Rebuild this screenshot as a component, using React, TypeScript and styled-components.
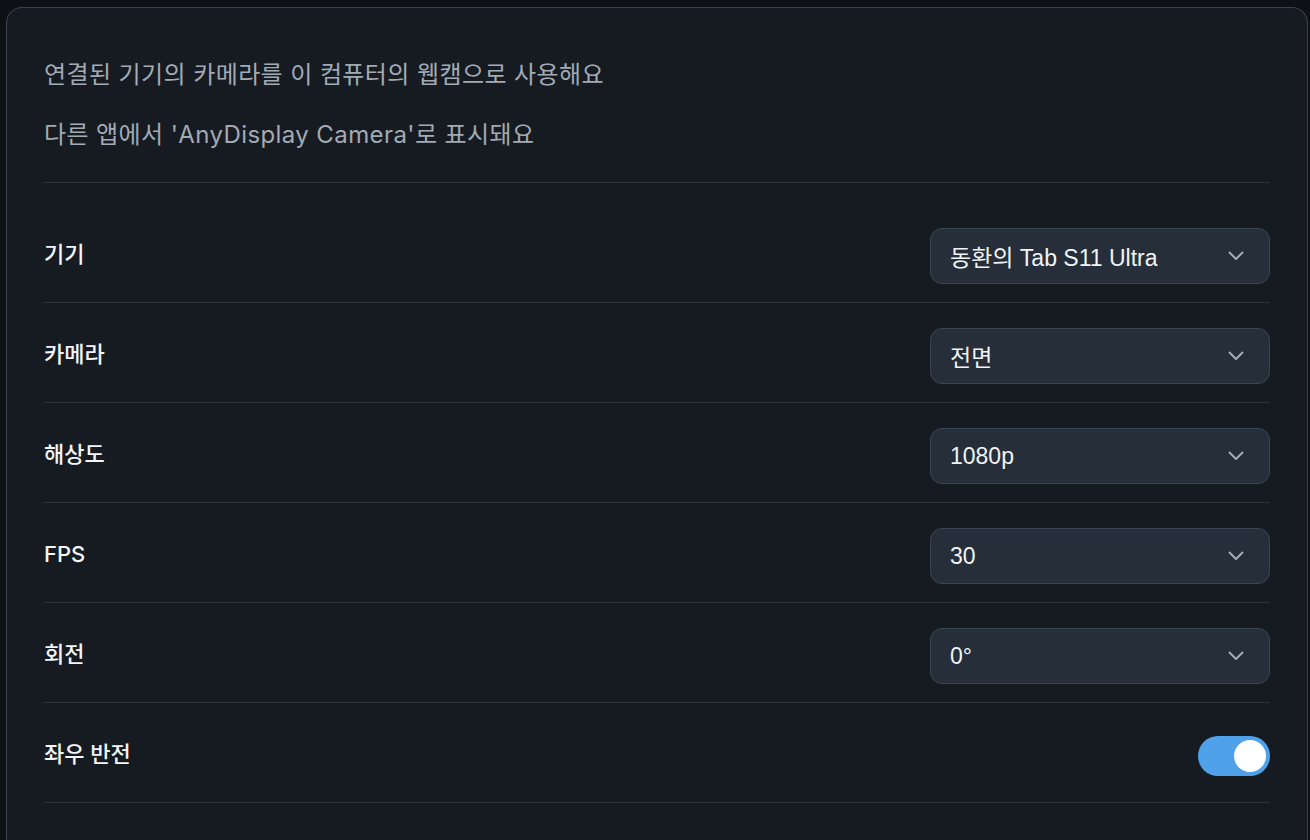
import React, { useState } from 'react';
import styled, { createGlobalStyle } from 'styled-components';

const GlobalStyle = createGlobalStyle`
  html, body {
    margin: 0;
    padding: 0;
    background: #0d1015;
  }
  body {
    font-family: Inter, "Noto Sans CJK KR", sans-serif;
    overflow: hidden;
  }
`;

const Page = styled.div`
  padding: 7px 2px 0 6px;
  height: 840px;
  box-sizing: border-box;
`;

const Card = styled.section`
  background: #161b22;
  border: 1px solid #3a434e;
  border-bottom: none;
  border-radius: 16px 16px 0 0;
  padding: 52px 37px 40px;
  min-height: 900px;
  box-sizing: border-box;
`;

const Header = styled.header`
  display: flex;
  flex-direction: column;
  gap: 30px;
  padding-bottom: 32px;
  border-bottom: 1px solid #2c333c;
`;

const Note = styled.p`
  margin: 0;
  font-size: 24px;
  line-height: 30px;
  color: #a2aab4;
  letter-spacing: 0.4px;
`;

const List = styled.div`
  display: flex;
  flex-direction: column;
  margin-top: 20px;
`;

const Row = styled.div`
  display: flex;
  align-items: center;
  justify-content: space-between;
  height: 56px;
  padding: 25px 0 18px;
  border-bottom: 1px solid #2c333c;
`;

const Label = styled.span`
  font-size: 22px;
  font-weight: 500;
  line-height: 26px;
  margin-top: -4px;
  color: #f3f5f8;
`;

const SelectBox = styled.button`
  display: flex;
  align-items: center;
  justify-content: space-between;
  width: 340px;
  height: 56px;
  box-sizing: border-box;
  padding: 0 25px 0 19px;
  background: #252e39;
  border: 1.5px solid #3a4553;
  border-radius: 12px;
  color: #f1f4f7;
  font-family: "Liberation Sans", Arial, "Noto Sans CJK KR", sans-serif;
  font-size: 23px;
  cursor: pointer;
`;

const Chevron = styled.svg`
  width: 16px;
  height: 10px;
  flex: none;
`;

const Track = styled.button<{ $on: boolean }>`
  display: flex;
  align-items: center;
  justify-content: ${(p) => (p.$on ? 'flex-end' : 'flex-start')};
  width: 72px;
  height: 40px;
  padding: 0 4px;
  box-sizing: border-box;
  border: none;
  border-radius: 20px;
  background: ${(p) => (p.$on ? '#4fa2ea' : '#3a434e')};
  cursor: pointer;
`;

const Knob = styled.span`
  width: 32px;
  height: 32px;
  border-radius: 50%;
  background: #ffffff;
`;

function Select({ value }: { value: string }) {
  return (
    <SelectBox type="button">
      <span>{value}</span>
      <Chevron viewBox="0 0 16 10" fill="none">
        <path d="M1.5 1.5L8 8L14.5 1.5" stroke="#a3abb5" strokeWidth="2" strokeLinecap="round" strokeLinejoin="round" />
      </Chevron>
    </SelectBox>
  );
}

const settings = [
  { label: '기기', value: '동환의 Tab S11 Ultra' },
  { label: '카메라', value: '전면' },
  { label: '해상도', value: '1080p' },
  { label: 'FPS', value: '30' },
  { label: '회전', value: '0°' },
];

export default function App() {
  const [mirror, setMirror] = useState(true);
  return (
    <>
      <GlobalStyle />
      <Page>
        <Card>
          <Header>
            <Note>연결된 기기의 카메라를 이 컴퓨터의 웹캠으로 사용해요</Note>
            <Note>다른 앱에서 'AnyDisplay Camera'로 표시돼요</Note>
          </Header>
          <List>
            {settings.map((s) => (
              <Row key={s.label}>
                <Label>{s.label}</Label>
                <Select value={s.value} />
              </Row>
            ))}
            <Row>
              <Label>좌우 반전</Label>
              <Track $on={mirror} onClick={() => setMirror(!mirror)}>
                <Knob />
              </Track>
            </Row>
          </List>
        </Card>
      </Page>
    </>
  );
}
